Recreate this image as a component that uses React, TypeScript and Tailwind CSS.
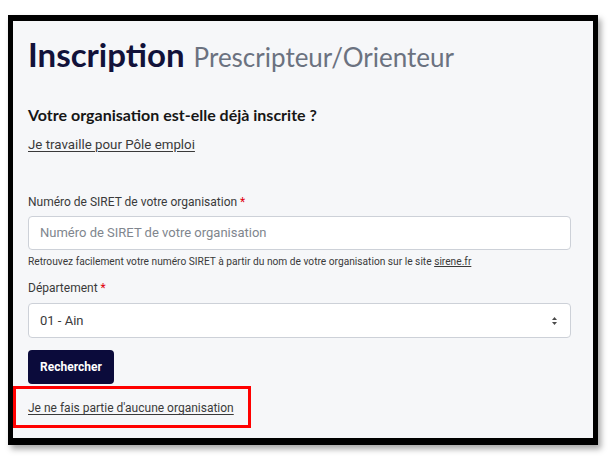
import React from "react";

export default function App() {
  return (
    <div className="w-[609px] h-[466px] bg-white pt-[15px] pl-[8px]" style={{ fontFamily: "Roboto, 'Liberation Sans', sans-serif" }}>
      <div className="w-[590px] h-[430px] border-black border-x-[5px] border-t-[6px] border-b-[7px] bg-[#f6f7f9] shadow-[3px_4px_6px_rgba(0,0,0,0.35)] flex flex-col">
        <div className="pl-[15px] pr-[22px] flex flex-col">
          <div className="flex items-baseline gap-[9px] mt-[17px] h-[35px]" style={{ fontFamily: "Lato, 'Noto Sans', sans-serif" }}>
            <span className="text-[33px] font-bold text-[#12123a] leading-none">Inscription</span>
            <span className="text-[26px] text-[#6b7280] leading-none">Prescripteur/Orienteur</span>
          </div>
          <div className="mt-[32px] text-[16px] font-bold text-[#161616] leading-[20px]" style={{ fontFamily: "Lato, 'Noto Sans', sans-serif" }}>
            Votre organisation est-elle déjà inscrite ?
          </div>
          <div className="mt-[9px] leading-[20px]">
            <a className="text-[13.3px] text-[#3a3a3a] underline underline-offset-2">Je travaille pour Pôle emploi</a>
          </div>
          <div className="mt-[39px] text-[12px] text-[#3a3a3a] leading-[16px]">
            Numéro de SIRET de votre organisation <span className="text-[#e1000f]">*</span>
          </div>
          <div className="mt-[6px] h-[34px] rounded-[4px] border border-[#cdd1d8] bg-white flex items-center px-[11px] text-[13px] text-[#80868e]">
            Numéro de SIRET de votre organisation
          </div>
          <div className="mt-[5px] text-[10.2px] text-[#3a3a3a] leading-[14px]">
            Retrouvez facilement votre numéro SIRET à partir du nom de votre organisation sur le site <span className="underline">sirene.fr</span>
          </div>
          <div className="mt-[11px] text-[12px] text-[#3a3a3a] leading-[16px]">
            Département <span className="text-[#e1000f]">*</span>
          </div>
          <div className="mt-[7px] h-[35px] rounded-[4px] border border-[#cdd1d8] bg-white flex items-center justify-between pl-[11px] pr-[12px] text-[13px] text-[#3a3a3a]">
            <span>01 - Ain</span>
            <svg width="7" height="10" viewBox="0 0 7 10">
              <path d="M3.5 1 L6 4 L1 4 Z" fill="#4a4a4a" />
              <path d="M3.5 9 L6 6 L1 6 Z" fill="#4a4a4a" />
            </svg>
          </div>
          <div className="mt-[12px]">
            <button className="h-[34px] w-[86px] rounded-[4px] bg-[#0b0b3b] text-white text-[12px] font-bold">Rechercher</button>
          </div>
        </div>
        <div className="mt-[2px] w-[238px] h-[42px] border-[3px] border-[#ff0000] pl-[12px] pt-[6px]">
          <a className="text-[12px] text-[#3a3a3a] underline underline-offset-2 leading-[16px]">Je ne fais partie d'aucune organisation</a>
        </div>
      </div>
    </div>
  );
}
